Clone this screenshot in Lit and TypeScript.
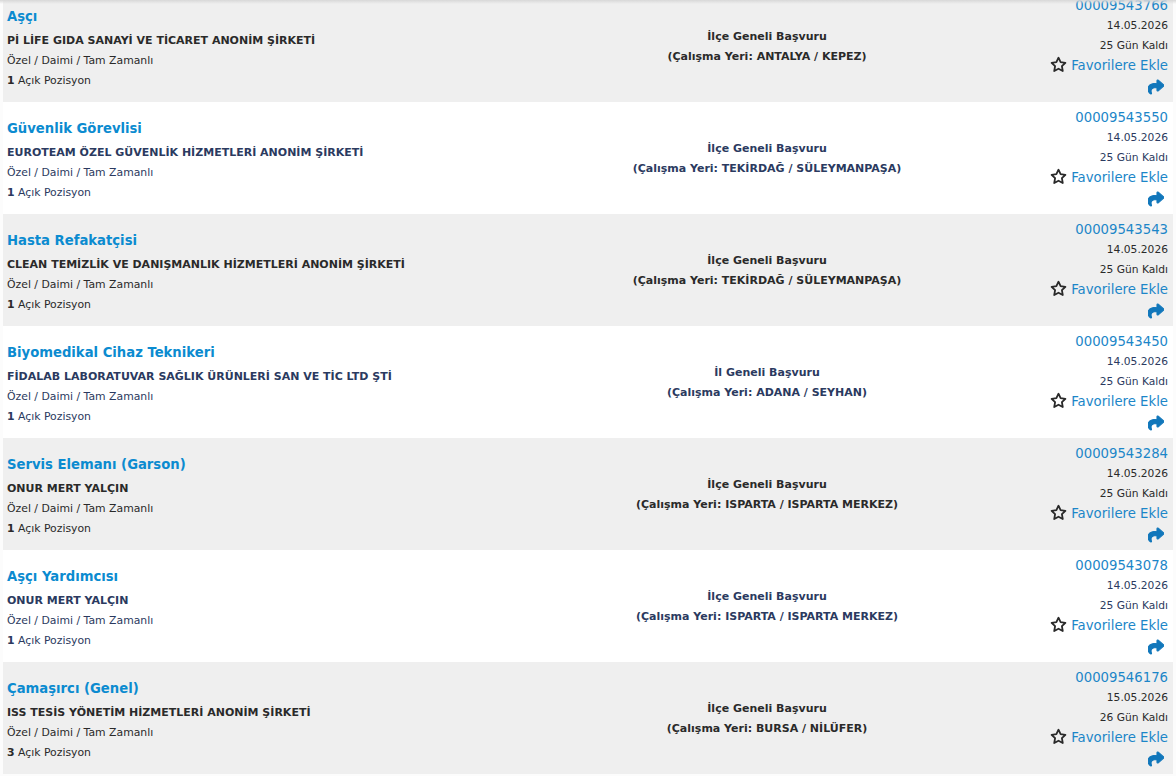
import { LitElement, html, css } from "lit";
import { customElement } from "lit/decorators.js";

const jobs = [
  ["Aşçı", "Pİ LİFE GIDA SANAYİ VE TİCARET ANONİM ŞİRKETİ", "İlçe Geneli Başvuru", "ANTALYA / KEPEZ", "00009543766", "14.05.2026", "25", "1"],
  ["Güvenlik Görevlisi", "EUROTEAM ÖZEL GÜVENLİK HİZMETLERİ ANONİM ŞİRKETİ", "İlçe Geneli Başvuru", "TEKİRDAĞ / SÜLEYMANPAŞA", "00009543550", "14.05.2026", "25", "1"],
  ["Hasta Refakatçisi", "CLEAN TEMİZLİK VE DANIŞMANLIK HİZMETLERİ ANONİM ŞİRKETİ", "İlçe Geneli Başvuru", "TEKİRDAĞ / SÜLEYMANPAŞA", "00009543543", "14.05.2026", "25", "1"],
  ["Biyomedikal Cihaz Teknikeri", "FİDALAB LABORATUVAR SAĞLIK ÜRÜNLERİ SAN VE TİC LTD ŞTİ", "İl Geneli Başvuru", "ADANA / SEYHAN", "00009543450", "14.05.2026", "25", "1"],
  ["Servis Elemanı (Garson)", "ONUR MERT YALÇIN", "İlçe Geneli Başvuru", "ISPARTA / ISPARTA MERKEZ", "00009543284", "14.05.2026", "25", "1"],
  ["Aşçı Yardımcısı", "ONUR MERT YALÇIN", "İlçe Geneli Başvuru", "ISPARTA / ISPARTA MERKEZ", "00009543078", "14.05.2026", "25", "1"],
  ["Çamaşırcı (Genel)", "ISS TESİS YÖNETİM HİZMETLERİ ANONİM ŞİRKETİ", "İlçe Geneli Başvuru", "BURSA / NİLÜFER", "00009546176", "15.05.2026", "26", "3"],
];

@customElement("app-root")
export class AppRoot extends LitElement {
  static styles = css`
    :host { display: block; width: 1176px; height: 776px; overflow: hidden; position: relative; background: #fcfcfc;
      font-family: "DejaVu Sans", Verdana, sans-serif; color: #2a2a2a; }
    .shadow { position: absolute; inset: 0 0 auto 0; height: 4px; background: linear-gradient(#d8d8d8, rgba(255,255,255,0)); }
    .list { display: flex; flex-direction: column; margin-top: -10px; padding: 0 3px 0 3px; }
    .row { height: 112px; box-sizing: border-box; display: grid; grid-template-columns: 503px 514px 1fr; padding: 0 5px 0 4px; }
    .row:nth-child(odd) { background: #efefef; }
    .row:nth-child(even) { background: #fff; color: #2b3a60; }
    .left { padding-top: 17px; }
    .title { font-size: 13.2px; font-weight: 700; color: #0b8bd0; line-height: 20px; height: 24px; }
    .comp { font-size: 11px; font-weight: 700; line-height: 20px; white-space: nowrap; }
    .sub { font-size: 10.85px; line-height: 20px; }
    .mid { font-size: 11px; font-weight: 700; line-height: 20px; text-align: center; padding-top: 37px; }
    .right { font-size: 10.7px; text-align: right; padding-top: 5px; line-height: 20px; }
    .code, .fav { font-size: 13.25px; color: #1c86c8; }
    .code { line-height: 21px; }
    .fav { display: flex; justify-content: flex-end; align-items: center; gap: 4px; height: 20px; }
    .star { margin-bottom: 4px; }
    .share { display: flex; justify-content: flex-end; height: 22px; align-items: center; padding-right: 4px; }
    svg { display: block; }
  `;
  render() {
    return html`<div class="list">
      ${jobs.map((j) => html`<div class="row">
        <div class="left">
          <div class="title">${j[0]}</div>
          <div class="comp">${j[1]}</div>
          <div class="sub">Özel / Daimi / Tam Zamanlı</div>
          <div class="sub"><b>${j[7]}</b> Açık Pozisyon</div>
        </div>
        <div class="mid"><div>${j[2]}</div><div>(Çalışma Yeri: ${j[3]})</div></div>
        <div class="right">
          <div class="code">${j[4]}</div>
          <div>${j[5]}</div>
          <div>${j[6]} Gün Kaldı</div>
          <div class="fav">
            <svg class="star" width="17" height="17" viewBox="0 0 17 17"><path d="M8.5 1.7l2.1 4.4 4.8.7-3.5 3.4.85 4.8-4.25-2.3-4.25 2.3.85-4.8-3.5-3.4 4.8-.7z" fill="none" stroke="#2a2a2a" stroke-width="1.8" stroke-linejoin="round"/></svg>
            <span>Favorilere Ekle</span>
          </div>
          <div class="share">
            <svg width="16" height="16" viewBox="0 0 512 512"><path fill="#1177bb" stroke="#1177bb" stroke-width="36" d="M503.691 189.836L327.687 37.851C312.281 24.546 288 35.347 288 56.015v80.053C127.371 137.907 0 170.1 0 322.326c0 61.441 39.581 122.309 83.333 154.132 13.653 9.931 33.111-2.533 28.077-18.631C66.066 312.814 132.917 274.316 288 272.085V360c0 20.7 24.3 31.453 39.687 18.164l176.004-152c11.071-9.562 11.086-26.753 0-36.328z"/></svg>
          </div>
        </div>
      </div>`)}
    </div><div class="shadow"></div>`;
  }
}
